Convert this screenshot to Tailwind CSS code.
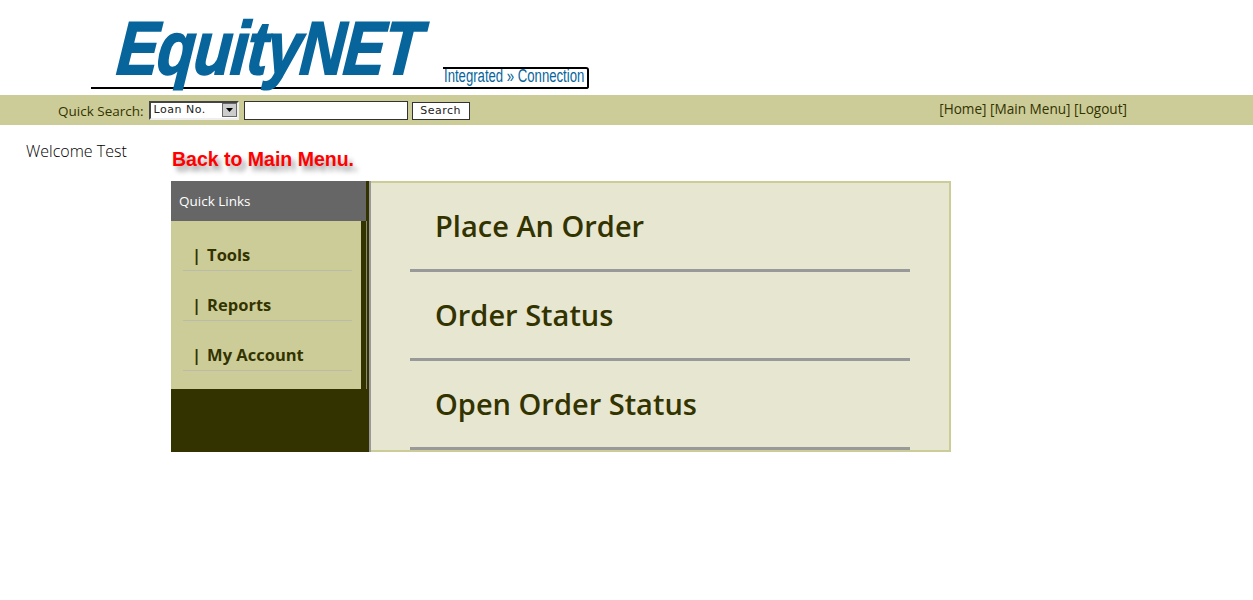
<!DOCTYPE html>
<html>
<head>
    <title>EquityNET</title>
    <script src="https://cdn.jsdelivr.net/npm/@tailwindcss/browser@4"></script>
</head>
<body class="bg-white font-['DejaVu_Sans',sans-serif] text-black overflow-hidden">
<!-- logo -->
<div class="h-[95px] pl-[91px] flex items-end">
    <div class="relative w-[498px] h-[89px] border-b-2 border-black mb-[6px] rounded-br-[3px]">
        <span class="absolute left-[27px] top-[-2px] origin-left font-['Liberation_Sans',sans-serif] font-bold italic text-[75px] leading-[100px] tracking-[-1px] text-[#07659c] [-webkit-text-stroke:2px_#07659c] scale-x-[0.82] -skew-x-6 whitespace-nowrap">EquityNET</span>
        <div class="absolute left-[352px] bottom-[-2px] w-[146px] h-[22px] border-2 border-black border-l-0 rounded-r-[3px] bg-white flex items-center pb-[3px]">
            <span class="ml-[1px] font-['Liberation_Sans',sans-serif] text-[18px] text-[#07659c] origin-left scale-x-[0.73] whitespace-nowrap">Integrated » Connection</span>
        </div>
    </div>
</div>
<!-- search bar -->
<div class="h-[30px] bg-[#cccc99] flex items-center justify-between pl-[58px] pr-[126px] text-[#333300]">
    <form class="flex items-center text-[13.500px] font-['Open_Sans',sans-serif]">
        <label class="mr-[5px] pt-[2px]">Quick Search:</label>
        <div class="w-[90px] h-[19px] bg-white border-2 border-t-[#444] border-l-[#444] border-r-[#eee] border-b-[#eee] flex items-center justify-between text-[11px] text-[#222] tracking-[0.5px] font-['DejaVu_Sans',sans-serif]">
            <span class="pl-[3px]">Loan No.</span>
            <span class="w-[15px] h-[14px] bg-[#ccc] border border-[#666] flex items-center justify-center">
                <svg width="7" height="4" viewBox="0 0 7 4"><path d="M0 0h7L3.500 4z" fill="#000"/></svg>
            </span>
        </div>
        <input type="text" class="ml-[5px] w-[164px] h-[19px] bg-white border border-[#333]">
        <button type="button" class="ml-[4px] mt-[1px] w-[58px] h-[18px] bg-white border border-[#333] text-[11px] tracking-[0.5px] text-[#222] font-['DejaVu_Sans',sans-serif]">Search</button>
    </form>
    <div class="text-[13.600px] font-['Open_Sans',sans-serif] mb-[2px]">[Home] [Main Menu] [Logout]</div>
</div>
<!-- content -->
<div class="flex">
    <div class="w-[171px] pl-[26px] pt-[17px] text-[16px] leading-[18px] font-light font-['Open_Sans',sans-serif]">Welcome Test</div>
    <div class="flex-1">
        <div class="h-[56px] pt-[22px] pl-[1px] font-['Liberation_Sans',sans-serif] font-bold text-[19.500px] leading-[24px] text-[#ff0000] [text-shadow:4px_5px_5px_#999]">Back to Main Menu.</div>
        <div class="flex w-[780px] h-[271px]">
            <aside class="w-[200px] bg-[#333300] border-r-2 border-r-[#999] shrink-0">
                <div class="w-[195px] h-[40px] bg-[#666666] text-white text-[13.500px] pl-[8px] flex items-center font-['Open_Sans',sans-serif]">Quick Links</div>
                <div class="w-[196px] h-[168px] border-r border-[#8a8a70]">
                    <div class="w-[190px] h-[168px] bg-[#cccc99] pl-[12px] pr-[9px] pt-[10px] text-[#333300] font-['Open_Sans',sans-serif] font-bold text-[16.500px]">
                        <div class="h-[40px] mb-[10px] border-b border-[#bbbbaa] pl-[9px] flex items-center pt-[9px]"><span class="mr-[6px]">|</span>Tools</div>
                        <div class="h-[40px] mb-[10px] border-b border-[#bbbbaa] pl-[9px] flex items-center pt-[9px]"><span class="mr-[6px]">|</span>Reports</div>
                        <div class="h-[40px] border-b border-[#bbbbaa] pl-[9px] flex items-center pt-[9px]"><span class="mr-[6px]">|</span>My Account</div>
                    </div>
                </div>
            </aside>
            <main class="flex-1 bg-[#e6e6d1] border-2 border-l-0 border-[#cccc99] px-[39px] text-[#333300] font-['Open_Sans',sans-serif] font-semibold text-[29px]">
                <div class="h-[89px] border-b-[3px] border-[#999999] pl-[25px] flex items-center">Place An Order</div>
                <div class="h-[89px] border-b-[3px] border-[#999999] pl-[25px] flex items-center">Order Status</div>
                <div class="h-[89px] border-b-[3px] border-[#999999] pl-[25px] flex items-center">Open Order Status</div>
            </main>
        </div>
    </div>
</div>
</body>
</html>
